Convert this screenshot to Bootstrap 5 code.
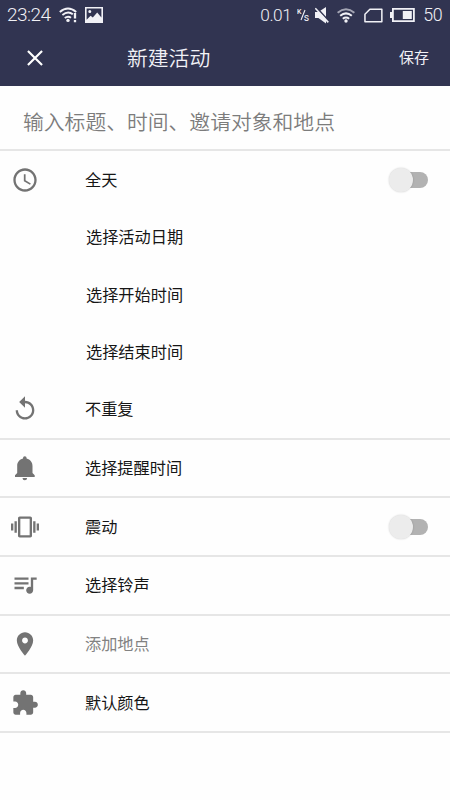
<!DOCTYPE html>
<html lang="zh-CN">
<head>
<meta charset="utf-8">
<meta name="viewport" content="width=device-width, initial-scale=1">
<title>新建活动</title>
<link href="https://cdn.jsdelivr.net/npm/bootstrap@5.3.0/dist/css/bootstrap.min.css" rel="stylesheet">
<style>
  body { font-family: Roboto, "Noto Sans CJK SC", sans-serif; color: #161616; background: #fefefe; overflow: hidden; }
  .top-area { background: #313451; color: #f1f1f6; height: 86px; }
  .status-line { height: 30px; padding: 0 8px 0 7px; font-weight: 300; font-size: 19.3px; line-height: 30px; }
  .status-line svg { display: block; flex: none; }
  .clock-text { width: 44px; font-size: 19px; letter-spacing: -.5px; }
  .wifi-alert { margin-left: 8px; }
  .rate { font-size: 17.3px; letter-spacing: -.5px; }
  .level { font-size: 17.8px; letter-spacing: -.5px; }
  .app-line { height: 56px; padding: 0 21px 0 27px; }
  .app-title { font-size: 20.8px; line-height: 30px; margin-left: 84px; font-weight: 350; padding-top: 1px; }
  .save-btn { font-size: 15px; line-height: 24px; color: inherit; }
  .headline { height: 65px; padding: 12px 23px 0; font-size: 20.8px; color: #7c7c7c; border-bottom: 2px solid #e6e6e6; font-weight: 350; }
  .opt { height: 58.7px; padding: 0 22px 0 11px; border-bottom: 2px solid #e6e6e6; font-size: 16.2px; }
  .opt-plain { height: 57.5px; border-bottom: 0; }
  .opt svg { width: 28px; height: 28px; fill: #737373; flex: none; }
  .opt-text { margin-left: 46px; padding-top: 2px; }
  .opt-plain > .opt-text:first-child { margin-left: 75px; }
  .muted-text { color: #828282; }
  .toggle { width: 39px; height: 24px; }
  .toggle-track { width: 31px; height: 16px; border-radius: 8px; background: #b2b2b2; }
  .toggle-knob { left: 0; top: 0; width: 24px; height: 24px; background: #ececec; box-shadow: 0 0 2px rgba(0,0,0,.2); }
</style>
<script src="https://cdn.jsdelivr.net/npm/bootstrap@5.3.0/dist/js/bootstrap.bundle.min.js"></script>
</head>
<body>
<header class="top-area">
  <div class="status-line d-flex align-items-center">
    <span class="clock-text">23:24</span>
    <svg class="wifi-alert" width="19" height="16" viewBox="0 0 19 16" fill="none" stroke="#f1f1f6" stroke-width="1.9"><path d="M.8 5Q9 -2 17.2 5M3.400 8Q9 3.400 13.800 7.300M5.800 11Q9 8.400 12 10.800"/><circle cx="9" cy="13.400" r="1.700" fill="#f1f1f6" stroke="none"/><path d="M16 6v5.500M16 13v2.300" stroke-width="2.300"/></svg>
    <svg width="18" height="16" viewBox="0 0 18 16" style="margin-left:7px"><path fill="#f1f1f6" fill-rule="evenodd" d="M0 0h18v16H0zM1.600 1.600v11.200l4-4 2.200 1.800 4.400-5.200 4.200 5V1.600zM4.800 3a1.500 1.500 0 1 1 0 3 1.500 1.500 0 0 1 0-3z"/></svg>
    <span class="rate ms-auto">0.01</span>
    <svg width="13" height="14" viewBox="0 0 13 14" style="margin-left:6px" fill="none" stroke="#f1f1f6" stroke-width="1.1"><path d="M8 2L4 12"/><text x="0" y="6" font-size="7" font-weight="500" fill="#f1f1f6" stroke="none">K</text><text x="6.8" y="12.5" font-size="10.5" font-weight="400" fill="#f1f1f6" stroke="none">s</text></svg>
    <svg width="14" height="17" viewBox="0 0 14 17" style="margin-left:5px" fill="#f1f1f6"><path d="M0 5h3.400L11 0v16.500L3.400 11H0z"/><path d="M1 0L14 14.400" stroke="#313451" stroke-width="1.800"/><path d="M.3 1.200L13.300 15.400" stroke="#f1f1f6" stroke-width="1.600"/></svg>
    <svg class="ms-2" width="18" height="15" viewBox="0 0 18 15" fill="none" stroke="#f1f1f6" stroke-width="2"><path opacity=".6" d="M.6 4.700Q9 -2.300 17.400 4.700"/><path d="M3.200 7.800Q9 3 14.800 7.800M5.800 10.700Q9 8.200 12.200 10.700"/><circle cx="9" cy="13" r="1.700" fill="#f1f1f6" stroke="none"/></svg>
    <svg width="19" height="15" viewBox="0 0 20 15" style="margin-left:9px" fill="none" stroke="#f1f1f6" stroke-width="1.6"><path d="M6.200 1H18.800V14H1V6.200z" stroke-linejoin="round"/></svg>
    <svg width="25" height="14" viewBox="0 0 25 14" style="margin-left:7px"><path fill="none" stroke="#f1f1f6" stroke-width="1.8" d="M2.900 .9h21v12.200h-21z"/><path fill="#f1f1f6" d="M0 4h3v6H0zM12.800 3h9v8h-9z"/></svg>
    <span class="level ms-2">50</span>
  </div>
  <div class="app-line d-flex align-items-center">
    <svg width="16" height="16" viewBox="0 0 17 17" fill="none" stroke="#fff" stroke-width="2.3"><path d="M1 1L16 16M16 1L1 16"/></svg>
    <h1 class="app-title mb-0">新建活动</h1>
    <button class="save-btn btn p-0 border-0 ms-auto" type="button">保存</button>
  </div>
</header>
<main>
  <div class="headline d-flex align-items-center text-nowrap">输入标题、时间、邀请对象和地点</div>
  <div class="opt opt-plain d-flex align-items-center">
    <svg viewBox="0 0 24 24"><path d="M11.990 2C6.470 2 2 6.480 2 12s4.470 10 9.990 10C17.520 22 22 17.520 22 12S17.520 2 11.990 2zM12 20c-4.420 0-8-3.580-8-8s3.580-8 8-8 8 3.580 8 8-3.580 8-8 8zm.5-13H11v6l5.250 3.150.75-1.230-4.500-2.670z"/></svg>
    <span class="opt-text">全天</span>
    <div class="toggle position-relative d-flex align-items-center justify-content-end ms-auto"><div class="toggle-track"></div><div class="toggle-knob position-absolute rounded-circle"></div></div>
  </div>
  <div class="opt opt-plain d-flex align-items-center"><span class="opt-text">选择活动日期</span></div>
  <div class="opt opt-plain d-flex align-items-center"><span class="opt-text">选择开始时间</span></div>
  <div class="opt opt-plain d-flex align-items-center"><span class="opt-text">选择结束时间</span></div>
  <div class="opt d-flex align-items-center">
    <svg viewBox="0 0 24 24"><path d="M12 5V1L7 6l5 5V7c3.310 0 6 2.690 6 6s-2.690 6-6 6-6-2.690-6-6H4c0 4.420 3.580 8 8 8s8-3.580 8-8-3.580-8-8-8z"/></svg>
    <span class="opt-text">不重复</span>
  </div>
  <div class="opt d-flex align-items-center">
    <svg viewBox="0 0 28 28"><path d="M12 4.600V4a1.800 1.800 0 0 1 3.600 0v.6C19.200 5.500 21.500 8.400 21.500 12v7l2.200 2.300V23H4v-1.700L6.200 19v-7c0-3.600 2.200-6.500 5.800-7.400zM11.500 24h4.600a2.300 2.200 0 0 1-4.600 0z"/></svg>
    <span class="opt-text">选择提醒时间</span>
  </div>
  <div class="opt d-flex align-items-center">
    <svg viewBox="0 0 24 24"><path d="M0 15h2V9H0v6zm3 2h2V7H3v10zm19-8v6h2V9h-2zm-3 8h2V7h-2v10zM16.500 3h-9C6.670 3 6 3.670 6 4.500v15c0 .83.67 1.500 1.500 1.500h9c.83 0 1.500-.67 1.500-1.500v-15c0-.83-.67-1.500-1.500-1.500zM16 19H8V5h8v14z"/></svg>
    <span class="opt-text">震动</span>
    <div class="toggle position-relative d-flex align-items-center justify-content-end ms-auto"><div class="toggle-track"></div><div class="toggle-knob position-absolute rounded-circle"></div></div>
  </div>
  <div class="opt d-flex align-items-center">
    <svg viewBox="0 .4 24 24"><path d="M15 6H3v2h12V6zm0 4H3v2h12v-2zM3 16h8v-2H3v2zM17 6v8.180c-.31-.11-.65-.18-1-.18-1.660 0-3 1.340-3 3s1.340 3 3 3 3-1.340 3-3V8h3V6h-5z"/></svg>
    <span class="opt-text">选择铃声</span>
  </div>
  <div class="opt d-flex align-items-center">
    <svg viewBox="0 0 24 24"><path d="M12 2C8.130 2 5 5.130 5 9c0 5.250 7 13 7 13s7-7.750 7-13c0-3.870-3.130-7-7-7zm0 9.500c-1.380 0-2.500-1.120-2.500-2.500s1.120-2.500 2.500-2.500 2.500 1.120 2.500 2.500-1.120 2.500-2.500 2.500z"/></svg>
    <span class="opt-text muted-text">添加地点</span>
  </div>
  <div class="opt d-flex align-items-center">
    <svg viewBox="0 0 24 24"><path d="M20.500 11H19V7c0-1.100-.9-2-2-2h-4V3.500C13 2.120 11.880 1 10.500 1S8 2.120 8 3.500V5H4c-1.100 0-1.990.9-1.990 2v3.800H3.500c1.490 0 2.700 1.210 2.700 2.700s-1.210 2.700-2.700 2.700H2V20c0 1.100.9 2 2 2h3.800v-1.500c0-1.490 1.210-2.700 2.700-2.700 1.490 0 2.700 1.210 2.700 2.700V22H17c1.100 0 2-.9 2-2v-4h1.500c1.380 0 2.500-1.120 2.500-2.500S21.880 11 20.500 11z"/></svg>
    <span class="opt-text">默认颜色</span>
  </div>
</main>
</body>
</html>
